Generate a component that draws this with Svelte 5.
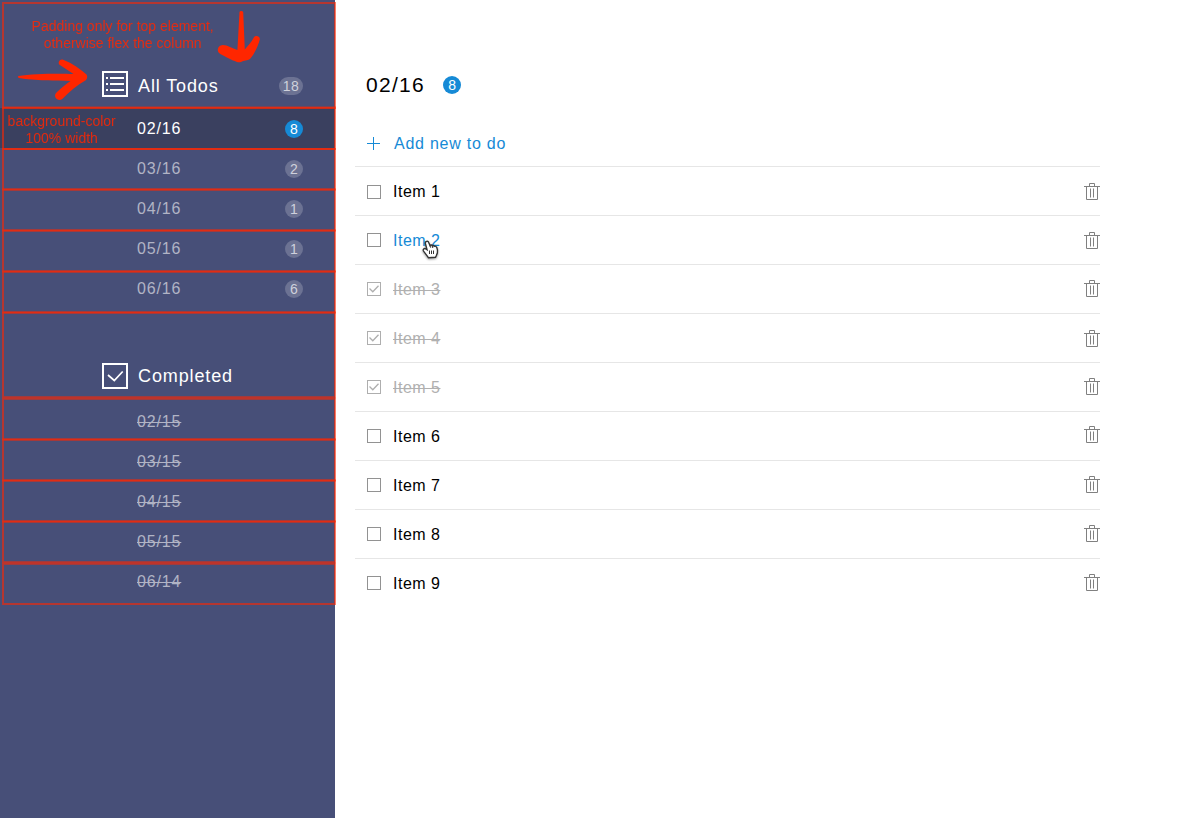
<script>
  const months = [
    { label: '02/16', count: 8, active: true },
    { label: '03/16', count: 2 },
    { label: '04/16', count: 1 },
    { label: '05/16', count: 1 },
    { label: '06/16', count: 6 }
  ];
  const finished = ['02/15', '03/15', '04/15', '05/15', '06/14'];
  // vertical nudge of the trash icon in each row
  const nudge = [1, 1, 0, 1, 0, -1, 0, 0, 0];
  const items = nudge.map((n, i) => ({
    name: `Item ${i + 1}`,
    done: i > 1 && i < 5,
    hover: i === 1,
    nudge: n
  }));
  // top and bottom edge of each outlined sidebar block
  const boxes = [
    [3, 108], [107.5, 149], [149, 189.5], [189.5, 230.5], [230.5, 271.5], [271.5, 312.5],
    [312.5, 397.2], [398.8, 439.5], [439.5, 480.5], [480.5, 521.5], [521.5, 562.2], [563.8, 604]
  ];
</script>

<div class="page">
  <nav class="side">
    <div class="head all">
      <svg width="26" height="26" viewBox="0 0 26 26" fill="none" stroke="#fff" stroke-width="2">
        <rect x="1" y="1" width="24" height="24" />
        <path d="M4 7h2M8 7h14M4 13h2M8 13h14M4 19h2M8 19h14" />
      </svg>
      <h2>All Todos</h2>
      <span class="badge wide">18</span>
    </div>
    <ul class="months">
      {#each months as m}
        <li class:active={m.active}><span>{m.label}</span><span class="badge">{m.count}</span></li>
      {/each}
    </ul>
    <div class="head completed">
      <svg width="26" height="26" viewBox="0 0 26 26" fill="none" stroke="#fff" stroke-width="2">
        <rect x="1" y="1" width="24" height="24" />
        <path d="M6 12l6.300 5.500L20.700 8.500" stroke-width="1.700" />
      </svg>
      <h2>Completed</h2>
    </div>
    <ul class="finished">
      {#each finished as f}
        <li><span>{f}</span></li>
      {/each}
    </ul>
  </nav>

  <main>
    <header><h1>02/16</h1><span class="badge blue">8</span></header>
    <div class="add">
      <svg width="15" height="15" viewBox="0 0 15 15" stroke="#168ad6"><path d="M1 7.500h13M7.500 1v13" /></svg>
      <span>Add new to do</span>
    </div>
    {#each items as item, i}
      <div class="item" class:done={item.done} class:hover={item.hover}>
        <svg class:low={i === 0} width="14" height="14" viewBox="0 0 14 14" fill="none">
          <rect x=".5" y=".5" width="13" height="13" stroke={item.done ? '#aeaeae' : '#929292'} />
          {#if item.done}<path d="M2.500 6.500l3.300 3.300 5.700-6" stroke="#aeaeae" stroke-width="1.300" />{/if}
        </svg>
        <span>{item.name}</span>
        <svg class="trash" style:margin-top="{item.nudge * 2}px" width="16" height="18" viewBox="0 0 16 18" fill="none" stroke="#808080">
          <path d="M0 3.500h16M5.500 3V.500h5V3M2.500 4v12.500h11V4M6.500 5.500v9M9.500 5.500v9" />
        </svg>
      </div>
    {/each}
  </main>

  <svg class="marks" width="340" height="610" viewBox="0 0 340 610">
    <g fill="none" stroke="#ff2600" stroke-opacity=".6" stroke-width="2">
      {#each boxes as [top, bottom]}
        <rect x="3" y={top} width="332" height={bottom - top} />
      {/each}
    </g>
    <path fill="#ff2600" d="M239.500 12c.5-1.200 3-1.200 3.700 0l1.600 37.500c3-3.500 6.500-7 9-12 1.300-3 6.700-1.500 6 2-1.800 7-5.300 14-9.800 19.500-2.500 2-6 1.300-9 3-2.700.9-5-.7-8-1.600-4-1.600-8-4.400-12.700-6.500-4.500-2.300-2.500-8.600 2.500-8.800 5 .2 9.300 3.200 14.600 5z" />
    <path fill="#ff2600" d="M18.500 76c14-2.300 39-2.500 55-2l-14-9.300c-2-2.300.2-6.300 3.700-5 9.300 3.700 17.300 9.300 23.300 14.800 1.300 2 .7 4-.7 5.800-9 4.700-16.500 11.500-23.500 18.700-4.500 3-9.300-2-6.300-6 4.500-4.500 9.300-8.500 14.500-12-14-.4-36-.2-51.500-3-1.300-.5-1.500-1.500-.5-2z" />
  </svg>
  <p class="note top">Padding only for top element,<br />otherwise flex the column</p>
  <p class="note bg">background-color<br />100% width</p>
  <svg class="cursor" width="18" height="20" viewBox="0 0 18 20">
    <path d="M4.300 1.500c1-.6 2 0 2.400 1l1.300 3c.8-.8 1.800-.5 2.200.2.800-.5 1.700-.2 2 .6 1-.4 2 .1 2.500 1 .8 2 1.300 4 .7 5.500l-.9 2.500-1 2-7 .5-1-1.500L1.300 10.800C.8 9 2.400 8 3.800 8.800l1.200.8L3.300 3.300c-.2-.8.2-1.500 1-1.800z" fill="#fff" stroke="#333" stroke-width="1.400" />
    <path d="M7.500 10.500v3.500M9.500 10.500v3.500M11.500 10.500v3.500M8 5.500l.7 2.200M10.300 6l.5 2" stroke="#333" fill="none" />
  </svg>
</div>

<style>
  :global(body) { margin: 0; background: #fff; }
  .page { position: relative; display: flex; height: 818px; font: 16px "Liberation Sans", Arial, sans-serif; overflow: hidden; }
  .side { width: 335px; flex: none; background: #474f78; box-sizing: border-box; }
  h1, h2, ul, p { margin: 0; padding: 0; font-weight: 400; list-style: none; }
  .head { display: flex; align-items: center; box-sizing: border-box; padding: 0 32px 0 102px; color: #fff; }
  .all { height: 108px; padding-top: 60px; }
  .completed { height: 94px; padding-top: 42px; }
  h2 { font-size: 18px; line-height: 26px; letter-spacing: .88px; margin-left: 10px; padding-top: 3px; }
  .completed h2 { padding-top: 0; margin-bottom: 1px; }
  .badge { display: block; width: 18px; height: 18px; border-radius: 9px; margin-left: auto; background: #6c7293; color: #cfd1dc; font-size: 14px; line-height: 18px; text-align: center; }
  .wide { width: 24px; letter-spacing: .5px; margin-top: 4px; }
  .months li, .finished li { display: flex; align-items: center; box-sizing: border-box; height: 40px; padding: 2px 32px 0 137px; letter-spacing: .85px; color: #b1b4c5; }
  .finished li { padding-top: 0; }
  .months .active { background: #3a405f; color: #fff; }
  .badge.blue, .active .badge { background: #168ad6; color: #fff; }
  .months .badge { letter-spacing: 0; }
  .finished span { text-decoration: line-through; }
  main { width: 745px; margin-left: 20px; }
  header { display: flex; align-items: center; height: 50px; padding: 60px 0 10px 11px; }
  h1 { font-size: 21px; letter-spacing: 1.300px; }
  header .badge { margin-left: 18px; }
  .add { display: flex; align-items: center; height: 46px; padding-left: 11px; color: #168ad6; letter-spacing: .75px; }
  .add span { margin-left: 13px; padding-top: 2px; }
  .item { display: flex; align-items: center; height: 48px; border-top: 1px solid #e6e6e6; padding-left: 12px; letter-spacing: .5px; color: #000; }
  .item span { margin-left: 12px; padding-top: 2px; }
  .low { margin-top: 2px; }
  .done { color: #b0b0b0; }
  .done span { text-decoration: line-through; }
  .hover { color: #168ad6; }
  .trash { margin-left: auto; }
  .marks { position: absolute; left: 0; top: 0; }
  .note { position: absolute; color: #ff2600; opacity: .85; font-size: 14px; line-height: 17px; text-align: center; white-space: nowrap; }
  .top { left: 31.600px; top: 18px; }
  .bg { left: 7.600px; top: 113px; }
  .cursor { position: absolute; left: 422px; top: 240px; filter: drop-shadow(0 1px 1px #0006); }
</style>
